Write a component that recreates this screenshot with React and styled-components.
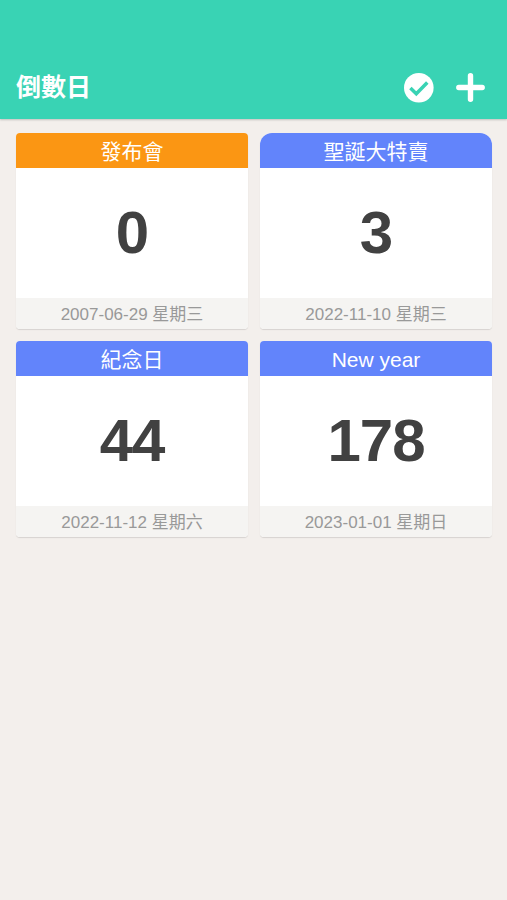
import React from 'react';
import styled, { createGlobalStyle } from 'styled-components';

const GlobalStyle = createGlobalStyle`
  * {
    box-sizing: border-box;
  }

  body {
    margin: 0;
    background-color: #f3efec;
    font-family: 'Liberation Sans', 'Noto Sans CJK TC', sans-serif;
  }
`;

const Page = styled.div`
  min-height: 100vh;
  background-color: #f3efec;
`;

const Header = styled.header`
  height: 119px;
  padding: 0 22px 12px 16px;
  display: flex;
  align-items: flex-end;
  justify-content: space-between;
  background-color: #39d3b4;
  color: #ffffff;
  box-shadow: 0 1px 2px rgba(0, 0, 0, 0.2);
`;

const Title = styled.h1`
  margin: 0;
  font-size: 25px;
  font-weight: 700;
  line-height: 40px;
`;

const Actions = styled.div`
  display: flex;
  align-items: center;
  gap: 22px;
  height: 39px;
`;

const IconButton = styled.button`
  display: flex;
  padding: 0;
  border: none;
  background: none;
  color: inherit;
  cursor: pointer;
`;

const Grid = styled.main`
  display: grid;
  grid-template-columns: 1fr 1fr;
  gap: 12px;
  padding: 14px 15px 0 16px;
`;

const Card = styled.article`
  height: 196px;
  display: flex;
  flex-direction: column;
  overflow: hidden;
  background-color: #ffffff;
  border-radius: ${({ $rounded }) => ($rounded ? '12px 12px 4px 4px' : '4px')};
  box-shadow: 0 1px 1px rgba(0, 0, 0, 0.12);
`;

const CardTitle = styled.h2`
  margin: 0;
  height: 35px;
  flex: none;
  background-color: ${({ $color }) => $color};
  color: #ffffff;
  font-size: 21px;
  font-weight: 400;
  line-height: 38px;
  text-align: center;
`;

const Days = styled.div`
  flex: 1;
  display: flex;
  align-items: center;
  justify-content: center;
  padding-bottom: 2px;
  color: #414141;
  font-size: 60px;
  font-weight: 700;
  letter-spacing: -1px;
`;

const CardDate = styled.div`
  height: 31px;
  flex: none;
  background-color: #f5f4f2;
  color: #999999;
  font-size: 17px;
  line-height: 33px;
  text-align: center;
`;

const events = [
  { title: '發布會', days: 0, date: '2007-06-29 星期三', color: '#fb9613' },
  { title: '聖誕大特賣', days: 3, date: '2022-11-10 星期三', color: '#6284fb', rounded: true },
  { title: '紀念日', days: 44, date: '2022-11-12 星期六', color: '#6284fb' },
  { title: 'New year', days: 178, date: '2023-01-01 星期日', color: '#6284fb' },
];

const App = () => {
  return (
    <>
      <GlobalStyle />
      <Page>
        <Header>
          <Title>倒數日</Title>
          <Actions>
            <IconButton aria-label="完成">
              <svg width="30" height="30" viewBox="0 0 30 30">
                <circle cx="14.8" cy="14.8" r="14.8" fill="currentColor" />
                <path d="M6.4 15l5.9 5.7 11-11.2" fill="none" stroke="#39d3b4" strokeWidth="3.5" />
              </svg>
            </IconButton>
            <IconButton aria-label="新增">
              <svg width="29" height="29" viewBox="0 0 29 29">
                <path d="M14.5 2.8v23.4M2.8 14.5h23.4" stroke="currentColor" strokeWidth="5.4" strokeLinecap="round" />
              </svg>
            </IconButton>
          </Actions>
        </Header>
        <Grid>
          {events.map((event) => (
            <Card key={event.title} $rounded={event.rounded}>
              <CardTitle $color={event.color}>{event.title}</CardTitle>
              <Days>{event.days}</Days>
              <CardDate>{event.date}</CardDate>
            </Card>
          ))}
        </Grid>
      </Page>
    </>
  );
};

export default App;
